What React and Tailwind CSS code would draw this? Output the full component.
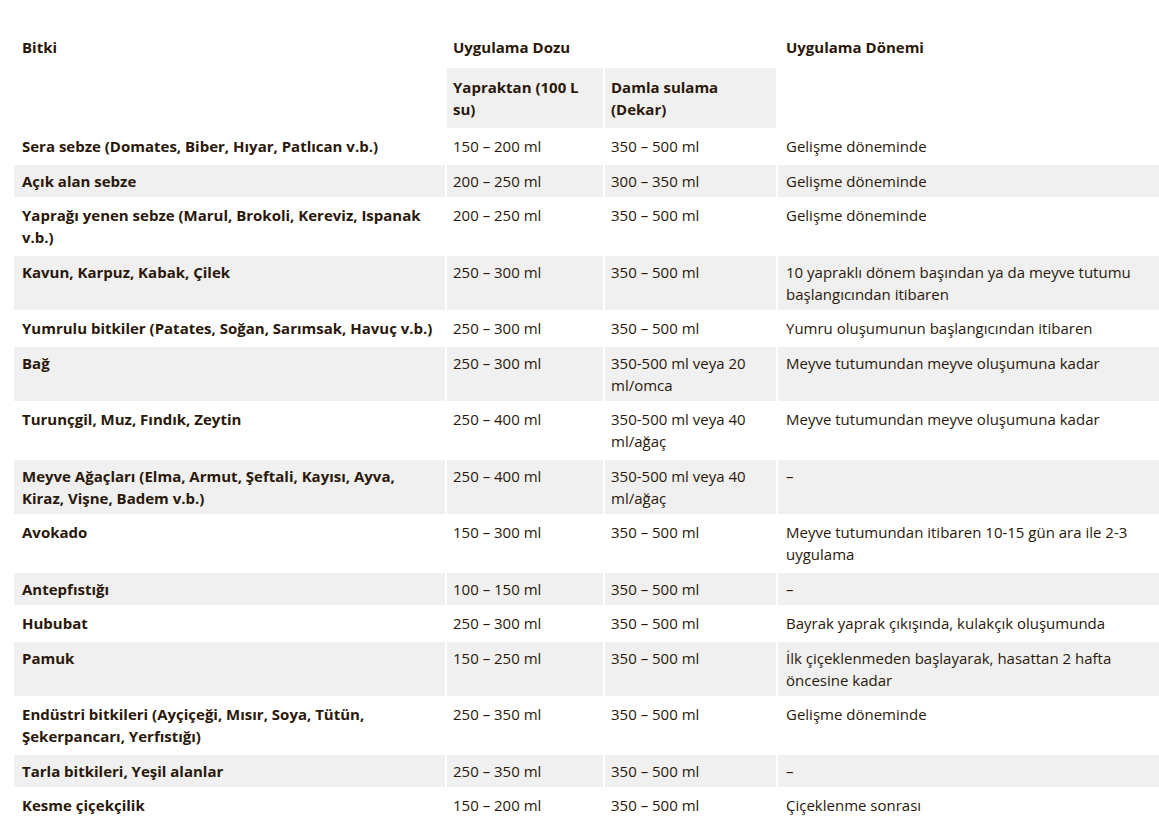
import React from "react";

const rows = [
  ["Sera sebze (Domates, Biber, Hıyar, Patlıcan v.b.)", "150 – 200 ml", "350 – 500 ml", "Gelişme döneminde"],
  ["Açık alan sebze", "200 – 250 ml", "300 – 350 ml", "Gelişme döneminde"],
  ["Yaprağı yenen sebze (Marul, Brokoli, Kereviz, Ispanak v.b.)", "200 – 250 ml", "350 – 500 ml", "Gelişme döneminde"],
  ["Kavun, Karpuz, Kabak, Çilek", "250 – 300 ml", "350 – 500 ml", "10 yapraklı dönem başından ya da meyve tutumu başlangıcından itibaren"],
  ["Yumrulu bitkiler (Patates, Soğan, Sarımsak, Havuç v.b.)", "250 – 300 ml", "350 – 500 ml", "Yumru oluşumunun başlangıcından itibaren"],
  ["Bağ", "250 – 300 ml", "350-500 ml veya 20 ml/omca", "Meyve tutumundan meyve oluşumuna kadar"],
  ["Turunçgil, Muz, Fındık, Zeytin", "250 – 400 ml", "350-500 ml veya 40 ml/ağaç", "Meyve tutumundan meyve oluşumuna kadar"],
  ["Meyve Ağaçları (Elma, Armut, Şeftali, Kayısı, Ayva, Kiraz, Vişne, Badem v.b.)", "250 – 400 ml", "350-500 ml veya 40 ml/ağaç", "–"],
  ["Avokado", "150 – 300 ml", "350 – 500 ml", "Meyve tutumundan itibaren 10-15 gün ara ile 2-3 uygulama"],
  ["Antepfıstığı", "100 – 150 ml", "350 – 500 ml", "–"],
  ["Hububat", "250 – 300 ml", "350 – 500 ml", "Bayrak yaprak çıkışında, kulakçık oluşumunda"],
  ["Pamuk", "150 – 250 ml", "350 – 500 ml", "İlk çiçeklenmeden başlayarak, hasattan 2 hafta öncesine kadar"],
  ["Endüstri bitkileri (Ayçiçeği, Mısır, Soya, Tütün, Şekerpancarı, Yerfıstığı)", "250 – 350 ml", "350 – 500 ml", "Gelişme döneminde"],
  ["Tarla bitkileri, Yeşil alanlar", "250 – 350 ml", "350 – 500 ml", "–"],
  ["Kesme çiçekçilik", "150 – 200 ml", "350 – 500 ml", "Çiçeklenme sonrası"],
];

export default function App() {
  return (
    <div className="w-[1159px] h-[825px] overflow-hidden bg-white font-['Open_Sans',sans-serif] text-[15px] leading-[22px] text-[#2a180a]">
      <table className="ml-[12px] mt-[26px] table-fixed border-separate border-spacing-[2px] w-[1149px]">
        <colgroup>
          <col className="w-[431px]" />
          <col className="w-[156px]" />
          <col className="w-[171px]" />
          <col className="w-[381px]" />
        </colgroup>
        <thead>
          <tr>
            <th rowSpan={2} className="align-top text-left font-bold px-2 py-2">Bitki</th>
            <th colSpan={2} className="align-top text-left font-bold px-[6px] py-2">Uygulama Dozu</th>
            <th rowSpan={2} className="align-top text-left font-bold px-2 py-2">Uygulama Dönemi</th>
          </tr>
          <tr>
            <th className="align-top text-left font-bold px-[6px] py-2 bg-[#f0f0f0]">Yapraktan (100 L su)</th>
            <th className="align-top text-left font-bold px-[6px] py-2 bg-[#f0f0f0]">Damla sulama (Dekar)</th>
          </tr>
        </thead>
        <tbody>
          {rows.map((r, i) => {
            const bg = i % 2 === 1 ? "bg-[#f0f0f0]" : "";
            return (
              <tr key={i}>
                <td className={`align-top font-bold px-2 py-[5.25px] ${bg}`}>{r[0]}</td>
                <td className={`align-top px-[6px] py-[5.25px] ${bg}`}>{r[1]}</td>
                <td className={`align-top px-[6px] py-[5.25px] ${bg}`}>{r[2]}</td>
                <td className={`align-top px-2 py-[5.25px] ${bg}`}>{r[3]}</td>
              </tr>
            );
          })}
        </tbody>
      </table>
    </div>
  );
}
